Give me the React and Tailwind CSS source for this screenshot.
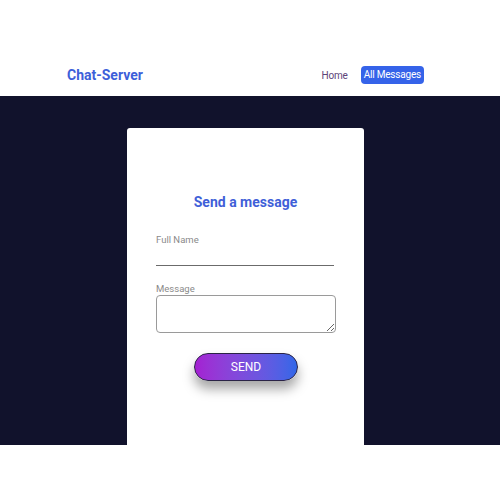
export default function App() {
  return (
    <div className="min-h-[500px] bg-white font-['Roboto',sans-serif]">
      <header className="h-[96px] pt-[54px] flex items-center justify-between pl-[67px] pr-[76px]">
        <h1 className="text-[14px] font-bold text-[#3d5fd9] leading-none">Chat-Server</h1>
        <nav className="flex items-center gap-[13px] text-[10px] tracking-[-0.2px]">
          <a className="text-[#5e4579]">Home</a>
          <a className="bg-[#3563e9] text-white rounded-[4px] px-[3px] py-[4px] leading-[10px]">All Messages</a>
        </nav>
      </header>

      <section className="bg-[#11122c] h-[349px] pt-[32px]">
        <div className="ml-[127px] w-[237px] h-[317px] bg-white rounded-t-[3px] px-[29px] pt-[64px]">
          <h2 className="text-center text-[14px] font-bold text-[#3f5fd8] leading-[20px]">Send a message</h2>

          <form className="mt-[22px]">
            <label className="block text-[9.5px] text-[#8a8a8a] leading-[12px]">Full Name</label>
            <input type="text" className="block w-[178px] h-[18px] border-b border-[#6b6b6b] outline-none mt-[2px]" />

            <label className="block text-[9.5px] text-[#8a8a8a] leading-[12px] mt-[17px]">Message</label>
            <textarea className="block w-[180px] h-[38px] border border-[#9a9a9a] rounded-[4px] resize-y outline-none" />

            <div className="flex justify-center mt-[20px] pl-[1px]">
              <button
                type="button"
                className="w-[104px] h-[28px] rounded-full bg-gradient-to-r from-[#a41fd2] to-[#2f67e8] border border-[#2a2346] text-white text-[12px] shadow-[0_8px_12px_rgba(0,0,0,0.35)]"
              >
                SEND
              </button>
            </div>
          </form>
        </div>
      </section>
    </div>
  );
}
